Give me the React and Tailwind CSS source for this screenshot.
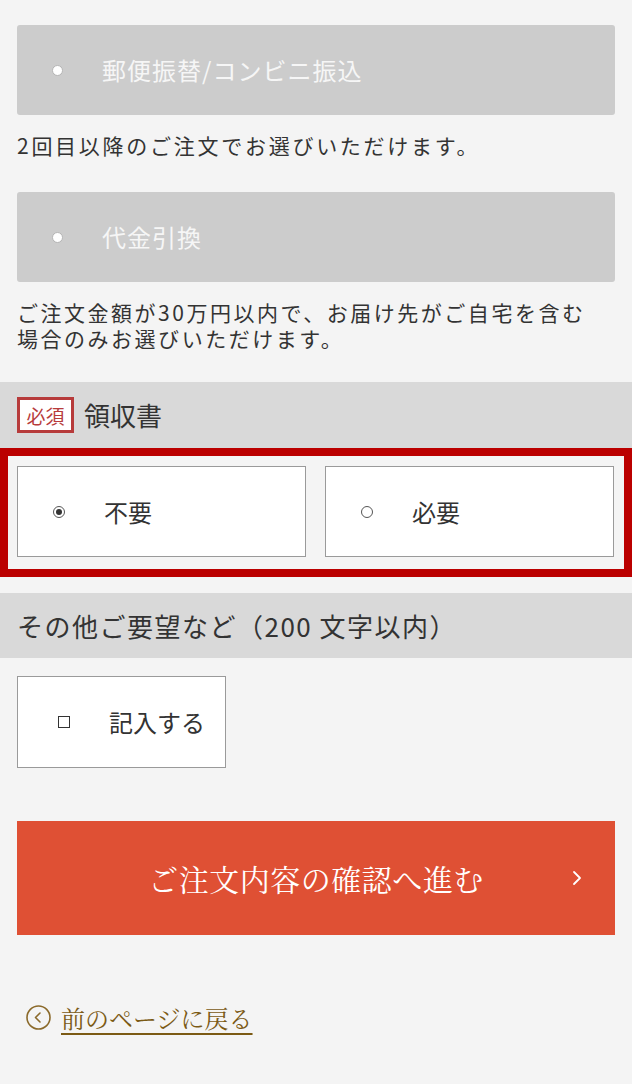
import { ChevronRight } from "lucide-react";

const sans = "font-['Noto_Sans_CJK_JP','Noto_Sans',sans-serif]";
const serif = "font-['Noto_Serif_CJK_JP','Liberation_Serif','Noto_Sans_CJK_JP',serif]";

function DisabledOption({ label }) {
    return (
        <div className="flex h-[90px] items-center rounded-[3px] bg-[#cccccc] pl-[35px]">
            <span className="h-[11px] w-[11px] rounded-full border border-[#b5b5b5] bg-white" />
            <span className="ml-[39px] text-[24px] leading-none tracking-[1px] text-[#f6f6f6]">{label}</span>
        </div>
    );
}

function RadioOption({ label, checked }) {
    return (
        <div className="flex h-[91px] items-center border border-[#9a9a9a] bg-white pl-[35px]">
            <span className="flex h-[12px] w-[12px] items-center justify-center rounded-full border border-[#555] bg-white">
                {checked && <span className="h-[6px] w-[6px] rounded-full bg-[#333]" />}
            </span>
            <span className="ml-[39px] text-[24px] leading-none text-[#333]">{label}</span>
        </div>
    );
}

export default function App() {
    return (
        <div className={`min-h-screen bg-[#f4f4f4] pb-10 ${sans}`}>
            <div className="px-[17px] pt-[25px]">
                <DisabledOption label="郵便振替/コンビニ振込" />
                <p className="mt-[17px] text-[21px] leading-[26px] tracking-[0.13em] text-[#333]">
                    2回目以降のご注文でお選びいただけます。
                </p>

                <div className="mt-[34px]">
                    <DisabledOption label="代金引換" />
                </div>
                <p className="mt-[17px] text-[21px] leading-[26px] tracking-[0.12em] text-[#333]">
                    ご注文金額が30万円以内で、お届け先がご自宅を含む
                    <br />
                    場合のみお選びいただけます。
                </p>
            </div>

            <div className="mt-[31px] flex h-[66px] items-center bg-[#d9d9d9] px-[17px]">
                <span className="flex h-[36px] w-[57px] items-center justify-center border-[3px] border-[#b73b3b] bg-white text-[19px] leading-none text-[#b73b3b]">
                    必須
                </span>
                <span className="ml-[10px] text-[26px] leading-none text-[#333]">領収書</span>
            </div>

            <div className="border-[8px] border-[#bb0000] pb-[12px] pl-[9px] pr-[10px] pt-[10px]">
                <div className="grid grid-cols-2 gap-[19px]">
                    <RadioOption label="不要" checked />
                    <RadioOption label="必要" />
                </div>
            </div>

            <div className="mt-[16px] flex h-[65px] items-center bg-[#d9d9d9] px-[17px]">
                <span className="text-[26px] leading-none tracking-[1.5px] text-[#333]">その他ご要望など（200 文字以内）</span>
            </div>

            <div className="px-[17px]">
                <div className="mt-[18px] flex h-[92px] w-[209px] items-center border border-[#9a9a9a] bg-white pl-[40px]">
                    <span className="h-[12px] w-[12px] border border-[#333] bg-white" />
                    <span className="ml-[39px] text-[24px] leading-none text-[#333]">記入する</span>
                </div>

                <button className="relative mt-[53px] flex h-[114px] w-full items-center justify-center bg-[#df5034] text-white">
                    <span className={`${serif} text-[30px] leading-none tracking-[0.5px]`}>ご注文内容の確認へ進む</span>
                    <ChevronRight className="absolute right-[26px] top-1/2 h-[24px] w-[24px] -translate-y-1/2" strokeWidth={1.8} />
                </button>

                <a href="#" className="mt-[70px] ml-[9px] flex items-center gap-[10px] text-[#7b5a14]">
                    <svg width="25" height="25" viewBox="0 0 25 25" fill="none">
                        <circle cx="12.5" cy="12.5" r="11.5" stroke="#8b6a2b" strokeWidth="1.6" />
                        <path d="M14 8 L9.5 12.5 L14 17" stroke="#8b6a2b" strokeWidth="1.6" strokeLinecap="round" strokeLinejoin="round" />
                    </svg>
                    <span className={`${serif} text-[24px] leading-none underline decoration-2 underline-offset-[5px]`}>前のページに戻る</span>
                </a>
            </div>
        </div>
    );
}
